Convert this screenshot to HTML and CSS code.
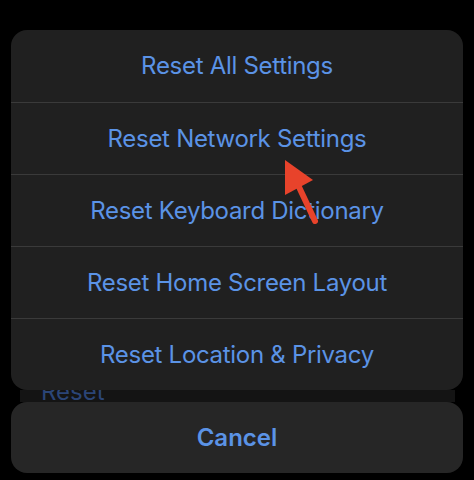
FILE: index.html
```html
<!DOCTYPE html>
<html>
<head>
<meta charset="utf-8">
<link rel="stylesheet" href="styles.css">
</head>
<body>
<div class="screen">
  <div class="sheet">
    <div class="row">Reset All Settings</div>
    <div class="row">Reset Network Settings</div>
    <div class="row">Reset Keyboard Dictionary</div>
    <div class="row">Reset Home Screen Layout</div>
    <div class="row">Reset Location &amp; Privacy</div>
  </div>
  <div class="behind"><span class="behind-text">Reset</span></div>
  <div class="cancel">Cancel</div>
  <svg class="arrow" width="474" height="480" viewBox="0 0 474 480">
    <line x1="299" y1="187" x2="315" y2="221" stroke="#e8432b" stroke-width="6" stroke-linecap="round"/>
    <polygon points="285,160 285,195 313,180" fill="#e8432b"/>
  </svg>
</div>
</body>
</html>
```
FILE: styles.css
```css
html, body {
  margin: 0;
  padding: 0;
  background: #000;
}
.screen {
  position: relative;
  width: 474px;
  height: 480px;
  padding: 30px 11px 0 11px;
  box-sizing: border-box;
  font-family: Inter, "Liberation Sans", sans-serif;
}
.sheet {
  background: #202020;
  border-radius: 16px;
  overflow: hidden;
}
.row {
  height: 72px;
  box-sizing: border-box;
  display: flex;
  align-items: center;
  justify-content: center;
  color: #5b93e6;
  font-size: 24px;
  letter-spacing: -0.3px;
  padding-bottom: 1px;
}
.row + .row {
  border-top: 1px solid #3a3a3a;
}
.behind {
  height: 12px;
  margin: 0 8px 0 9px;
  background: #141414;
  overflow: hidden;
  padding-left: 21px;
}
.behind-text {
  display: block;
  margin-top: -10px;
  font-size: 24px;
  line-height: 24px;
  color: #2b4577;
}
.cancel {
  height: 71px;
  background: #262626;
  border-radius: 16px;
  display: flex;
  align-items: center;
  justify-content: center;
  color: #5b93e6;
  font-size: 24px;
  font-weight: 600;
}
.arrow {
  position: absolute;
  left: 0;
  top: 0;
}
```
